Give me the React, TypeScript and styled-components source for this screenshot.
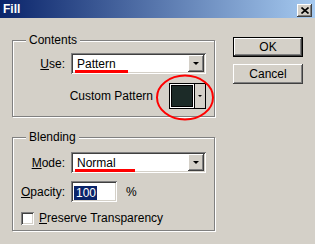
import React from "react";
import styled, { createGlobalStyle } from "styled-components";

const Global = createGlobalStyle`
  html, body { margin: 0; padding: 0; background: #d4d0c8; }
  body { font-family: "Liberation Sans", Arial, sans-serif; font-size: 12px; color: #000; }
  * { box-sizing: border-box; }
`;

const raised = `
  box-shadow: inset -1px -1px #404040, inset 1px 1px #ffffff, inset -2px -2px #808080, inset 2px 2px #d4d0c8;
`;
const sunken = `
  box-shadow: inset 1px 1px #808080, inset -1px -1px #ffffff, inset 2px 2px #404040, inset -2px -2px #d4d0c8;
`;

const Window = styled.div`
  width: 315px;
  height: 244px;
  background: #d4d0c8;
  display: flex;
  flex-direction: column;
  overflow: hidden;
`;

const TitleBar = styled.div`
  height: 18px;
  flex: none;
  display: flex;
  align-items: center;
  justify-content: space-between;
  padding: 0 3px;
  background: linear-gradient(to right, #0a246a, #a6caf0);
`;

const Title = styled.span`
  color: #fff;
  font-weight: bold;
  font-size: 12px;
  line-height: 14px;
`;

const CloseButton = styled.div`
  width: 15px;
  height: 13px;
  margin-top: 2px;
  background: #d4d0c8;
  ${raised}
  display: flex;
  align-items: center;
  justify-content: center;
`;

const Body = styled.div`
  display: flex;
  gap: 18px;
  padding: 16px 0 0 12px;
`;

const LeftColumn = styled.div`
  width: 203px;
  display: flex;
  flex-direction: column;
  gap: 14px;
`;

const Group = styled.fieldset`
  margin: 0;
  padding: 0;
  min-width: 0;
  border: 1px solid #808080;
  box-shadow: inset 1px 1px #ffffff, 1px 1px #ffffff;
`;

const Legend = styled.legend`
  margin-left: 13px;
  padding: 0 3px;
  line-height: 13px;
  font-size: 12px;
  background: #d4d0c8;
`;

const GroupBody = styled.div<{ $pt: number; $pb: number; $gap: number }>`
  display: flex;
  flex-direction: column;
  gap: ${(p) => p.$gap}px;
  padding: ${(p) => p.$pt}px 8px ${(p) => p.$pb}px 0;
`;

const Row = styled.div<{ $end?: boolean; $pl?: number; $mt?: number }>`
  display: flex;
  align-items: center;
  justify-content: ${(p) => (p.$end ? "flex-end" : "flex-start")};
  padding-left: ${(p) => p.$pl ?? 0}px;
  margin-top: ${(p) => p.$mt ?? 0}px;
`;

const FieldLabel = styled.label<{ $w?: number; $mr?: number }>`
  width: ${(p) => (p.$w ? `${p.$w}px` : "auto")};
  margin-right: ${(p) => p.$mr ?? 6}px;
  text-align: right;
  line-height: 14px;
  white-space: nowrap;
`;

const Select = styled.div`
  position: relative;
  flex: 1;
  height: 21px;
  padding: 2px;
  background: #fff;
  ${sunken}
  display: flex;
  align-items: center;
`;

const SelectText = styled.span`
  padding-left: 4px;
  line-height: 14px;
`;

const DropButton = styled.div`
  margin-left: auto;
  width: 16px;
  height: 17px;
  background: #d4d0c8;
  ${raised}
  display: flex;
  align-items: center;
  justify-content: center;
`;

const Arrow = styled.span<{ $size: number }>`
  width: 0;
  height: 0;
  border-left: ${(p) => p.$size}px solid transparent;
  border-right: ${(p) => p.$size}px solid transparent;
  border-top: ${(p) => p.$size}px solid #000;
`;

const RedLine = styled.span<{ $w: number; $top: number }>`
  position: absolute;
  left: 4px;
  top: ${(p) => p.$top}px;
  width: ${(p) => p.$w}px;
  height: 3px;
  background: #ff0000;
`;

const PatternPicker = styled.div`
  position: relative;
  width: 37px;
  height: 26px;
  border: 1px solid #000;
  background: #d4d0c8;
  display: flex;
`;

const SwatchCell = styled.div`
  width: 24px;
  height: 24px;
  padding: 1px;
  background: #ffffff;
`;

const Swatch = styled.div`
  width: 22px;
  height: 22px;
  background: #1c2b28;
  border: 1px solid #000;
`;

const PickerArrow = styled.div`
  flex: 1;
  border-left: 1px solid #000;
  display: flex;
  align-items: center;
  justify-content: center;
`;

const Annotation = styled.svg`
  position: absolute;
  left: -16px;
  top: -12px;
  overflow: visible;
  pointer-events: none;
`;

const TextInput = styled.div`
  width: 46px;
  height: 21px;
  padding: 2px 0 0 3px;
  background: #fff;
  ${sunken}
  display: flex;
  align-items: center;
`;

const Selected = styled.span`
  background: #0a246a;
  color: #fff;
  line-height: 14px;
  padding: 0 1px 0 2px;
`;

const Unit = styled.span`
  margin-left: 9px;
  line-height: 14px;
`;

const Checkbox = styled.span`
  width: 13px;
  height: 13px;
  background: #fff;
  ${sunken}
  margin-right: 5px;
`;

const CheckLabel = styled.span`
  line-height: 14px;
`;

const ButtonColumn = styled.div`
  display: flex;
  flex-direction: column;
  gap: 7px;
  padding-top: 3px;
`;

const Button = styled.button<{ $default?: boolean }>`
  width: 70px;
  height: 20px;
  margin: 0;
  padding: 0;
  font: inherit;
  font-size: 12px;
  color: #000;
  background: #d4d0c8;
  border: ${(p) => (p.$default ? "1px solid #000" : "none")};
  ${raised}
`;

export default function App() {
  return (
    <>
      <Global />
      <Window>
        <TitleBar>
          <Title>Fill</Title>
          <CloseButton>
            <svg width="8" height="7" viewBox="0 0 8 7">
              <path d="M0.5 0.5 L7.5 6.5 M7.5 0.5 L0.5 6.5" stroke="#000" strokeWidth="1.6" />
            </svg>
          </CloseButton>
        </TitleBar>
        <Body>
          <LeftColumn>
            <Group>
              <Legend>Contents</Legend>
              <GroupBody $pt={6} $pb={7} $gap={9}>
                <Row>
                  <FieldLabel $w={52}>
                    <u>U</u>se:
                  </FieldLabel>
                  <Select>
                    <SelectText>Pattern</SelectText>
                    <RedLine $w={53} $top={17} />
                    <DropButton>
                      <Arrow $size={3.5} />
                    </DropButton>
                  </Select>
                </Row>
                <Row $end>
                  <FieldLabel $mr={16}>Custom Pattern</FieldLabel>
                  <PatternPicker>
                    <SwatchCell>
                      <Swatch />
                    </SwatchCell>
                    <PickerArrow>
                      <Arrow $size={2.5} />
                    </PickerArrow>
                    <Annotation width="60" height="50" viewBox="0 0 60 50">
                      <ellipse cx="31" cy="25.5" rx="28" ry="22" fill="none" stroke="#ff0000" strokeWidth="2" />
                    </Annotation>
                  </PatternPicker>
                </Row>
              </GroupBody>
            </Group>
            <Group>
              <Legend>Blending</Legend>
              <GroupBody $pt={8} $pb={5} $gap={8}>
                <Row>
                  <FieldLabel $w={52}>
                    <u>M</u>ode:
                  </FieldLabel>
                  <Select>
                    <SelectText>Normal</SelectText>
                    <RedLine $w={60} $top={17} />
                    <DropButton>
                      <Arrow $size={3.5} />
                    </DropButton>
                  </Select>
                </Row>
                <Row>
                  <FieldLabel $w={52}>
                    <u>O</u>pacity:
                  </FieldLabel>
                  <TextInput>
                    <Selected>100</Selected>
                  </TextInput>
                  <Unit>%</Unit>
                </Row>
                <Row $pl={8} $mt={1}>
                  <Checkbox />
                  <CheckLabel>
                    <u>P</u>reserve Transparency
                  </CheckLabel>
                </Row>
              </GroupBody>
            </Group>
          </LeftColumn>
          <ButtonColumn>
            <Button $default>OK</Button>
            <Button>Cancel</Button>
          </ButtonColumn>
        </Body>
      </Window>
    </>
  );
}
